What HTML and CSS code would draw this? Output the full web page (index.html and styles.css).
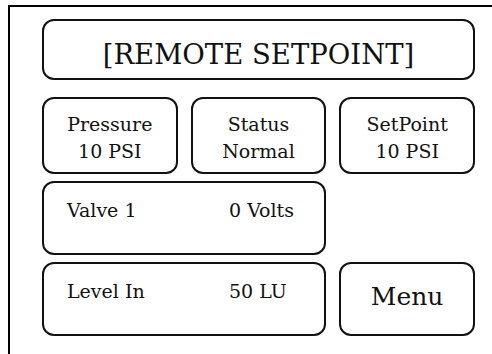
FILE: index.html
```html
<!DOCTYPE html>
<html>
<head>
<meta charset="utf-8">
<link rel="stylesheet" href="styles.css">
</head>
<body>
<div class="frame">
  <div class="box title">[REMOTE SETPOINT]</div>
  <div class="panel">
    <div class="box stat"><span>Pressure</span><span>10 PSI</span></div>
    <div class="box stat"><span>Status</span><span>Normal</span></div>
    <div class="box stat"><span>SetPoint</span><span>10 PSI</span></div>
    <div class="box reading wide"><span>Valve 1</span><span>0 Volts</span></div>
    <div class="box reading wide"><span>Level In</span><span>50 LU</span></div>
    <div class="box menu">Menu</div>
  </div>
</div>
</body>
</html>
```
FILE: styles.css
```css
html, body {
  margin: 0;
  padding: 0;
  background: #fff;
  height: 100%;
}
body {
  font-family: "DejaVu Serif", "Liberation Serif", serif;
  color: #111;
  overflow: hidden;
}
.frame {
  box-sizing: border-box;
  height: calc(100% - 5px);
  margin: 5px 0 0 8px;
  border-top: 2px solid #000;
  border-left: 2px solid #000;
  padding: 12px 0 0 32px;
}
.panel {
  width: 433px;
  display: grid;
  grid-template-columns: 1fr 1fr 1fr;
  grid-template-rows: 77px 74px 74px;
  column-gap: 13px;
  row-gap: 7px;
}
.box {
  border: 2px solid #111;
  border-radius: 12px;
  box-sizing: border-box;
}
.title {
  width: 433px;
  height: 61px;
  margin-bottom: 17px;
  display: flex;
  align-items: center;
  justify-content: center;
  font-size: 27.5px;
  padding-top: 8px;
}
.stat {
  display: flex;
  flex-direction: column;
  align-items: center;
  justify-content: center;
  font-size: 19px;
  line-height: 27px;
  padding-top: 5px;
}
.wide {
  grid-column: 1 / 3;
}
.reading {
  display: grid;
  grid-template-columns: 162px auto;
  align-content: start;
  font-size: 19px;
  line-height: 24px;
  padding: 15px 0 0 23px;
}
.menu {
  display: flex;
  align-items: center;
  justify-content: center;
  font-size: 25px;
  padding-bottom: 6px;
}
```
